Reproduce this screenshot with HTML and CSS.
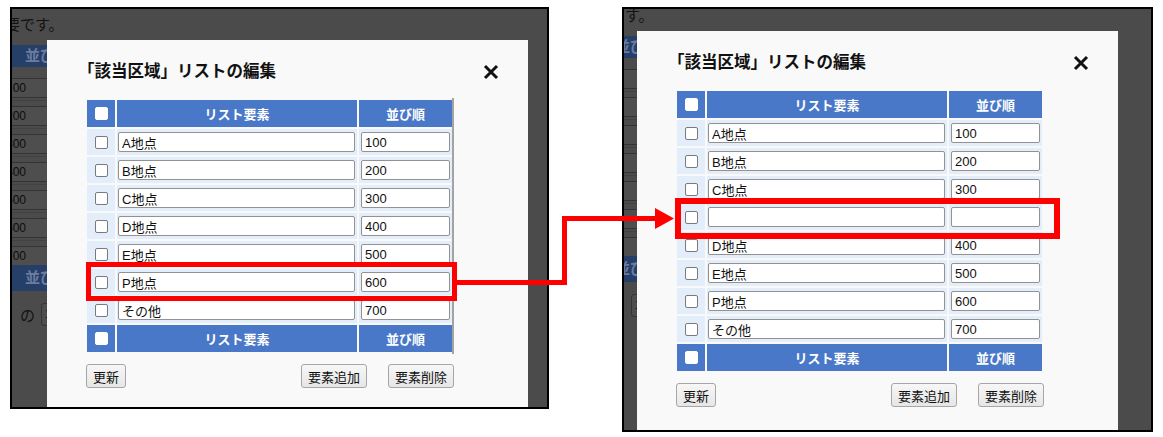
FILE: index.html
```html
<!DOCTYPE html>
<html lang="ja">

<head>
    <meta charset="UTF-8">
    <title>リスト編集 - 要素追加</title>
    <link rel="stylesheet" href="styles.css">
</head>

<body>
    <div class="stage">

        <!-- before: P地点 row selected -->
        <div class="shot shot-before">
            <div class="page">
                <p class="note">要です。</p>
                <div class="bg-head">並び</div>
                <div class="bg-row"><span class="bg-input">100</span></div>
                <div class="bg-row"><span class="bg-input">200</span></div>
                <div class="bg-row"><span class="bg-input">300</span></div>
                <div class="bg-row"><span class="bg-input">400</span></div>
                <div class="bg-row"><span class="bg-input">500</span></div>
                <div class="bg-row"><span class="bg-input">600</span></div>
                <div class="bg-row"><span class="bg-input">700</span></div>
                <div class="bg-head bg-head-foot">並び</div>
                <div class="bg-foot"><span>の</span><span class="bg-input bg-input-sm">1</span></div>
            </div>

            <div class="modal">
                <h2 class="modal-title">「該当区域」リストの編集</h2>
                <button class="close" type="button">
                    <svg width="16" height="16" viewBox="0 0 16 16"><path d="M2 2L14 14M14 2L2 14" stroke="#111" stroke-width="3" fill="none"/></svg>
                </button>

                <div class="list-wrap list-wrap-scroll">
                    <table class="list">
                        <thead>
                            <tr><th class="col-chk"><input type="checkbox"></th><th class="col-name">リスト要素</th><th class="col-order">並び順</th></tr>
                        </thead>
                        <tbody>
                            <tr><td><input type="checkbox"></td><td><input class="txt txt-name" value="A地点"></td><td><input class="txt txt-order" value="100"></td></tr>
                            <tr><td><input type="checkbox"></td><td><input class="txt txt-name" value="B地点"></td><td><input class="txt txt-order" value="200"></td></tr>
                            <tr><td><input type="checkbox"></td><td><input class="txt txt-name" value="C地点"></td><td><input class="txt txt-order" value="300"></td></tr>
                            <tr><td><input type="checkbox"></td><td><input class="txt txt-name" value="D地点"></td><td><input class="txt txt-order" value="400"></td></tr>
                            <tr><td><input type="checkbox"></td><td><input class="txt txt-name" value="E地点"></td><td><input class="txt txt-order" value="500"></td></tr>
                            <tr><td><input type="checkbox"></td><td><input class="txt txt-name" value="P地点"></td><td><input class="txt txt-order" value="600"></td></tr>
                            <tr><td><input type="checkbox"></td><td><input class="txt txt-name" value="その他"></td><td><input class="txt txt-order" value="700"></td></tr>
                        </tbody>
                        <tfoot>
                            <tr><th class="col-chk"><input type="checkbox"></th><th class="col-name">リスト要素</th><th class="col-order">並び順</th></tr>
                        </tfoot>
                    </table>
                </div>

                <div class="actions">
                    <button class="btn" type="button">更新</button>
                    <div class="actions-right">
                        <button class="btn" type="button">要素追加</button>
                        <button class="btn" type="button">要素削除</button>
                    </div>
                </div>
            </div>
        </div>

        <!-- after: empty row inserted above D地点 -->
        <div class="shot shot-after">
            <div class="page">
                <p class="note">要です。</p>
                <div class="bg-head">並び</div>
                <div class="bg-row"><span class="bg-input">100</span></div>
                <div class="bg-row"><span class="bg-input">200</span></div>
                <div class="bg-row"><span class="bg-input">300</span></div>
                <div class="bg-row"><span class="bg-input">400</span></div>
                <div class="bg-row"><span class="bg-input">500</span></div>
                <div class="bg-row"><span class="bg-input">600</span></div>
                <div class="bg-row"><span class="bg-input">700</span></div>
                <div class="bg-head bg-head-foot">並び</div>
                <div class="bg-foot"><span>の</span><span class="bg-input bg-input-sm">1</span></div>
            </div>

            <div class="modal">
                <h2 class="modal-title">「該当区域」リストの編集</h2>
                <button class="close" type="button">
                    <svg width="16" height="16" viewBox="0 0 16 16"><path d="M2 2L14 14M14 2L2 14" stroke="#111" stroke-width="3" fill="none"/></svg>
                </button>

                <div class="list-wrap">
                    <table class="list">
                        <thead>
                            <tr><th class="col-chk"><input type="checkbox"></th><th class="col-name">リスト要素</th><th class="col-order">並び順</th></tr>
                        </thead>
                        <tbody>
                            <tr><td><input type="checkbox"></td><td><input class="txt txt-name" value="A地点"></td><td><input class="txt txt-order" value="100"></td></tr>
                            <tr><td><input type="checkbox"></td><td><input class="txt txt-name" value="B地点"></td><td><input class="txt txt-order" value="200"></td></tr>
                            <tr><td><input type="checkbox"></td><td><input class="txt txt-name" value="C地点"></td><td><input class="txt txt-order" value="300"></td></tr>
                            <tr><td><input type="checkbox"></td><td><input class="txt txt-name" value=""></td><td><input class="txt txt-order" value=""></td></tr>
                            <tr><td><input type="checkbox"></td><td><input class="txt txt-name" value="D地点"></td><td><input class="txt txt-order" value="400"></td></tr>
                            <tr><td><input type="checkbox"></td><td><input class="txt txt-name" value="E地点"></td><td><input class="txt txt-order" value="500"></td></tr>
                            <tr><td><input type="checkbox"></td><td><input class="txt txt-name" value="P地点"></td><td><input class="txt txt-order" value="600"></td></tr>
                            <tr><td><input type="checkbox"></td><td><input class="txt txt-name" value="その他"></td><td><input class="txt txt-order" value="700"></td></tr>
                        </tbody>
                        <tfoot>
                            <tr><th class="col-chk"><input type="checkbox"></th><th class="col-name">リスト要素</th><th class="col-order">並び順</th></tr>
                        </tfoot>
                    </table>
                </div>

                <div class="actions">
                    <button class="btn" type="button">更新</button>
                    <div class="actions-right">
                        <button class="btn" type="button">要素追加</button>
                        <button class="btn" type="button">要素削除</button>
                    </div>
                </div>
            </div>
        </div>

        <!-- red annotations -->
        <div class="mark mark-before"></div>
        <div class="mark mark-after"></div>
        <svg class="connector" width="1163" height="437" viewBox="0 0 1163 437">
            <polyline points="457,282.5 564.5,282.5 564.5,218.5 657,218.5" fill="none" stroke="#ff0000" stroke-width="5"/>
            <polygon points="655,208 674,218.5 655,229" fill="#ff0000"/>
        </svg>
    </div>
</body>

</html>
```

FILE: styles.css
```css
body {
    margin: 0;
    background-color: #fff;
    font-family: "Liberation Sans", "Noto Sans CJK JP", sans-serif;
    color: #111;
}

.stage {
    position: relative;
    width: 1163px;
    height: 437px;
    display: flex;
    align-items: flex-start;
    gap: 73px;
    padding: 7px 0 0 10px;
    box-sizing: border-box;
}

/* screenshot frames */
.shot {
    position: relative;
    overflow: hidden;
    border: 2px solid #000;
    background-color: #4b4b4b;
    box-sizing: border-box;
}

.shot-before {
    width: 539px;
    height: 402px;
}

.shot-after {
    width: 531px;
    height: 425px;
}

/* page behind the dialog (dimmed) */
.page {
    width: 300px;
}

.shot-after .page {
    margin: -9px 0 0 -22px;
}

.note {
    margin: 7px 0 0 -7px;
    font-size: 15px;
    line-height: 18px;
    color: #121212;
}

.bg-head {
    margin-top: 11px;
    margin-bottom: 6px;
    height: 22px;
    line-height: 22px;
    padding-left: 13px;
    background-color: #263f69;
    color: #6b7ca0;
    font-size: 15px;
    font-weight: bold;
}

.bg-head-foot {
    margin-top: -4px;
    height: 26px;
    line-height: 26px;
}

.bg-row {
    height: 28px;
    padding-top: 5px;
    box-sizing: border-box;
    border-bottom: 1px solid #424242;
}

.bg-input {
    display: block;
    width: 60px;
    height: 20px;
    margin-left: -10px;
    padding-left: 3px;
    box-sizing: border-box;
    border: 1px solid #343434;
    background-color: #4e4e4e;
    font-size: 12px;
    line-height: 18px;
    color: #0c0c0c;
}

.bg-foot {
    display: flex;
    align-items: center;
    gap: 6px;
    margin-top: 12px;
    padding-left: 8px;
    font-size: 15px;
    color: #121212;
}

.bg-input-sm {
    margin-left: 0;
    height: 23px;
    line-height: 21px;
    border-radius: 3px;
}

/* dialog */
.modal {
    position: absolute;
    width: 481px;
    height: 420px;
    padding: 0 40px;
    box-sizing: border-box;
    background-color: #f9f9f9;
}

.shot-before .modal {
    top: 31px;
    left: 35px;
}

.shot-after .modal {
    top: 22px;
    left: 13px;
}

.modal-title {
    margin: 0 0 18px -9px;
    padding-top: 18px;
    font-family: "Noto Sans CJK JP", sans-serif;
    font-size: 16.5px;
    line-height: 24px;
    font-weight: bold;
    color: #111;
}

.close {
    position: absolute;
    top: 24px;
    right: 29px;
    width: 16px;
    height: 16px;
    padding: 0;
    border: none;
    background: none;
}

.close svg {
    display: block;
}

.list-wrap {
    width: 365px;
}

.list-wrap-scroll {
    border-right: 2px solid #a3a3a3;
    margin-top: -2px;
    padding-top: 2px;
}

.list {
    border-collapse: separate;
    border-spacing: 2px;
    margin: -2px;
}

.list th {
    height: 27px;
    padding: 0;
    background-color: #4a78c8;
    color: #fff;
    font-family: "Noto Sans CJK JP", sans-serif;
    font-size: 13px;
    font-weight: bold;
    text-align: center;
}

.list td {
    height: 26px;
    padding: 0;
    background-color: #e4eefa;
    text-align: center;
}

.col-chk {
    width: 28px;
}

.col-name {
    width: 240px;
}

.col-order {
    width: 93px;
}

.list input[type="checkbox"] {
    appearance: none;
    display: block;
    width: 13px;
    height: 13px;
    margin: 0 auto;
    border: 1px solid #7a7a7a;
    border-radius: 2px;
    background-color: #fff;
}

.list th input[type="checkbox"] {
    border-color: #fff;
}

.txt {
    display: block;
    height: 20px;
    padding: 0 3px;
    box-sizing: border-box;
    border: 1px solid #929292;
    border-radius: 2px;
    background-color: #fff;
    font-family: "Liberation Sans", "Noto Sans CJK JP", sans-serif;
    font-size: 13px;
    color: #111;
}

.txt-name {
    width: 237px;
    margin-left: 1px;
}

.txt-order {
    width: 89px;
    margin-left: 2px;
}

.actions {
    display: flex;
    justify-content: space-between;
    margin-top: 12px;
    margin-left: -1px;
    width: 368px;
}

.actions-right {
    display: flex;
    gap: 21px;
}

.btn {
    height: 24px;
    padding: 0 6px;
    border: 1px solid #a6a6a6;
    border-radius: 3px;
    background: linear-gradient(#f7f7f7, #e6e6e6);
    font-family: "Noto Sans CJK JP", sans-serif;
    font-size: 13px;
    color: #111;
}

/* annotations */
.mark {
    position: absolute;
    border: 5px solid #ff0000;
    box-sizing: border-box;
}

.mark-before {
    left: 86px;
    top: 262px;
    width: 371px;
    height: 39px;
}

.mark-after {
    left: 675px;
    top: 198px;
    width: 385px;
    height: 41px;
    border-width: 6px;
}

.connector {
    position: absolute;
    left: 0;
    top: 0;
    pointer-events: none;
}
```
